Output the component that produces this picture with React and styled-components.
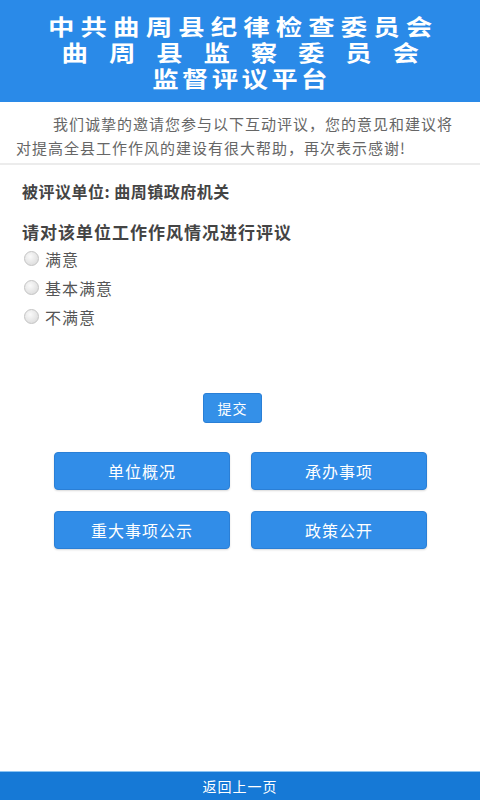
import React, { useState } from 'react';
import styled, { createGlobalStyle } from 'styled-components';

const GlobalStyle = createGlobalStyle`
  html, body {
    margin: 0;
    padding: 0;
    background: #fff;
  }
  body {
    font-family: "Noto Sans CJK SC", "Noto Sans", sans-serif;
  }
`;

// spacing is in unscaled px; the title glyphs are stretched wide in the design
const titleLines = [
    { text: '中共曲周县纪律检查委员会', spacing: 5.1 },
    { text: '曲周县监察委员会', spacing: 17.4 },
    { text: '监督评议平台', spacing: 2.8 }
];

const options = ['满意', '基本满意', '不满意'];

const links = ['单位概况', '承办事项', '重大事项公示', '政策公开'];

export default function App() {
    const [choice, setChoice] = useState(null);

    return (
        <Page>
            <GlobalStyle />
            <Header>
                {titleLines.map((line) => (
                    <TitleLine key={line.text} $spacing={line.spacing}>
                        {line.text}
                    </TitleLine>
                ))}
            </Header>

            <Intro>
                我们诚挚的邀请您参与以下互动评议，您的意见和建议将对提高全县工作作风的建设有很大帮助，再次表示感谢!
            </Intro>

            <Content>
                <Unit>被评议单位: 曲周镇政府机关</Unit>
                <Question>请对该单位工作作风情况进行评议</Question>
                <Options>
                    {options.map((opt) => (
                        <Option key={opt}>
                            <Radio
                                type="radio"
                                name="rating"
                                checked={choice === opt}
                                onChange={() => setChoice(opt)}
                            />
                            {opt}
                        </Option>
                    ))}
                </Options>

                <SubmitRow>
                    <SubmitButton type="button">提交</SubmitButton>
                </SubmitRow>

                <LinkGrid>
                    {links.map((label) => (
                        <LinkButton type="button" key={label}>
                            {label}
                        </LinkButton>
                    ))}
                </LinkGrid>
            </Content>

            <Footer>返回上一页</Footer>
        </Page>
    );
}

const Page = styled.div`
    min-height: 800px;
    display: flex;
    flex-direction: column;
`;

const Header = styled.header`
    background: #2a8ae8;
    padding: 12px 0;
    height: 102px;
    box-sizing: border-box;
    display: flex;
    flex-direction: column;
    align-items: center;
`;

const TitleLine = styled.div`
    color: #fff;
    font-size: 22px;
    font-weight: 700;
    line-height: 26px;
    height: 26px;
    letter-spacing: ${(p) => p.$spacing}px;
    padding-left: ${(p) => p.$spacing}px;
    white-space: nowrap;
    transform: scaleX(1.2);
`;

const Intro = styled.p`
    margin: 0;
    padding: 10px 14px 3px 16px;
    font-size: 15px;
    line-height: 24px;
    letter-spacing: 1px;
    color: #666;
    text-indent: 37px;
    border-bottom: 2px solid #ececec;
`;

const Content = styled.main`
    padding: 14px 22px 0;
    display: flex;
    flex-direction: column;
`;

const Unit = styled.div`
    font-size: 16px;
    font-weight: 700;
    line-height: 24px;
    letter-spacing: 0.5px;
    color: #444;
`;

const Question = styled.div`
    margin-top: 17px;
    font-size: 17px;
    font-weight: 700;
    line-height: 24px;
    letter-spacing: 1px;
    color: #444;
`;

const Options = styled.div`
    display: flex;
    flex-direction: column;
`;

const Option = styled.label`
    display: flex;
    align-items: center;
    height: 29px;
    font-size: 16px;
    letter-spacing: 1px;
    color: #555;
`;

const Radio = styled.input`
    appearance: none;
    width: 15px;
    height: 15px;
    margin: 0 6px 0 2px;
    border-radius: 50%;
    border: 1px solid #c4c4c4;
    background: radial-gradient(circle at 40% 35%, #fafafa, #d6d6d6);
    &:checked {
        background: radial-gradient(circle, #2a8ae8 40%, #fff 45%);
    }
`;

const SubmitRow = styled.div`
    display: flex;
    justify-content: center;
    margin-top: 62px;
    padding-right: 15px;
`;

const SubmitButton = styled.button`
    width: 59px;
    height: 30px;
    border: 1px solid #2a7fd6;
    border-radius: 3px;
    background: #3490e8;
    color: #fff;
    font-family: inherit;
    font-size: 14px;
    letter-spacing: 1px;
    padding: 0;
`;

const LinkGrid = styled.div`
    margin: 29px 0 0 32px;
    display: grid;
    grid-template-columns: 176px 176px;
    column-gap: 21px;
    row-gap: 21px;
`;

const LinkButton = styled.button`
    height: 38px;
    border: 1px solid #2a7fd6;
    border-radius: 4px;
    background: #318de8;
    color: #fff;
    font-family: inherit;
    font-size: 16px;
    letter-spacing: 1px;
    padding: 0;
    box-shadow: 0 1px 2px rgba(0, 0, 0, 0.15);
`;

const Footer = styled.footer`
    margin-top: auto;
    height: 28px;
    background: #1679d6;
    border-top: 1px solid #8cc4f2;
    color: #fff;
    font-size: 14px;
    letter-spacing: 1px;
    display: flex;
    align-items: center;
    justify-content: center;
`;
